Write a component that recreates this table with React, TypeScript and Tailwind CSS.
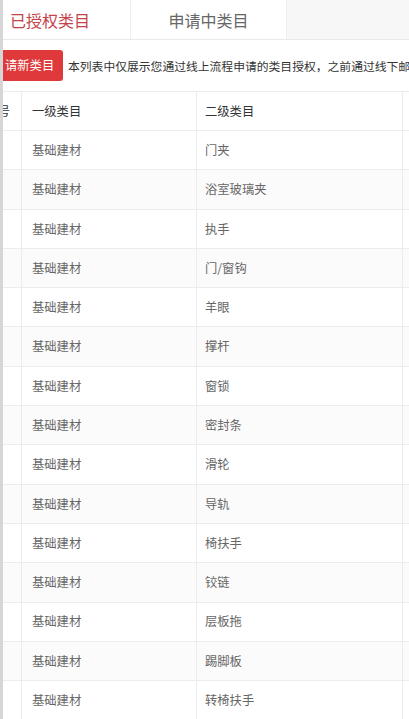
import React from "react";

const rows = [
  "门夹",
  "浴室玻璃夹",
  "执手",
  "门/窗钩",
  "羊眼",
  "撑杆",
  "窗锁",
  "密封条",
  "滑轮",
  "导轨",
  "椅扶手",
  "铰链",
  "层板拖",
  "踢脚板",
  "转椅扶手",
];

export default function App() {
  return (
    <div className="w-[409px] h-[719px] overflow-hidden bg-white flex font-['Noto_Sans_CJK_SC',sans-serif]">
      <div className="w-[3px] shrink-0 bg-[#d6d6d6]" />
      <div className="flex-1 min-w-0 flex flex-col overflow-hidden">
        <div className="h-[40px] shrink-0 flex bg-[#f7f7f7] border-b border-[#e9e9e9]">
          <div className="w-[127px] shrink-0 bg-white flex items-center pl-[7px] text-[16px] text-[#c4424a]">
            已授权类目
          </div>
          <div className="w-[157px] shrink-0 bg-white flex items-center justify-center border-l border-r border-[#efefef] text-[16px] text-[#666]">
            申请中类目
          </div>
        </div>
        <div className="mt-[10px] h-[31px] shrink-0 flex items-center overflow-hidden">
          <div className="w-[60px] shrink-0 h-full bg-[#e0393b] rounded-r-[3px] text-white text-[12.3px] flex items-center pl-[2px] whitespace-nowrap">
            请新类目
          </div>
          <div className="ml-[5px] shrink-0 whitespace-nowrap text-[11.8px] text-[#333]">
            本列表中仅展示您通过线上流程申请的类目授权，之前通过线下邮
          </div>
        </div>
        <div className="mt-[10px] border-t border-[#ececec] text-[12.3px]">
          <div className="grid grid-cols-[19px_175px_206px_1fr] h-[39px] text-[#333]">
            <div className="border-r border-b border-[#ececec] overflow-hidden flex items-center justify-end">
              <span className="whitespace-nowrap mr-[11px]">序号</span>
            </div>
            <div className="border-r border-b border-[#ececec] flex items-center pl-[10px]">一级类目</div>
            <div className="border-r border-b border-[#ececec] flex items-center pl-[8px]">二级类目</div>
            <div className="border-b border-[#ececec]" />
          </div>
          {rows.map((r, i) => (
            <div
              key={r}
              className={`grid grid-cols-[19px_175px_206px_1fr] h-[39.3px] text-[#666] ${
                i % 2 === 1 ? "bg-[#fbfbfb]" : "bg-white"
              }`}
            >
              <div className="border-r border-b border-[#ececec]" />
              <div className="border-r border-b border-[#ececec] flex items-center pl-[10px]">基础建材</div>
              <div className="border-r border-b border-[#ececec] flex items-center pl-[8px]">{r}</div>
              <div className="border-b border-[#ececec]" />
            </div>
          ))}
        </div>
      </div>
    </div>
  );
}
